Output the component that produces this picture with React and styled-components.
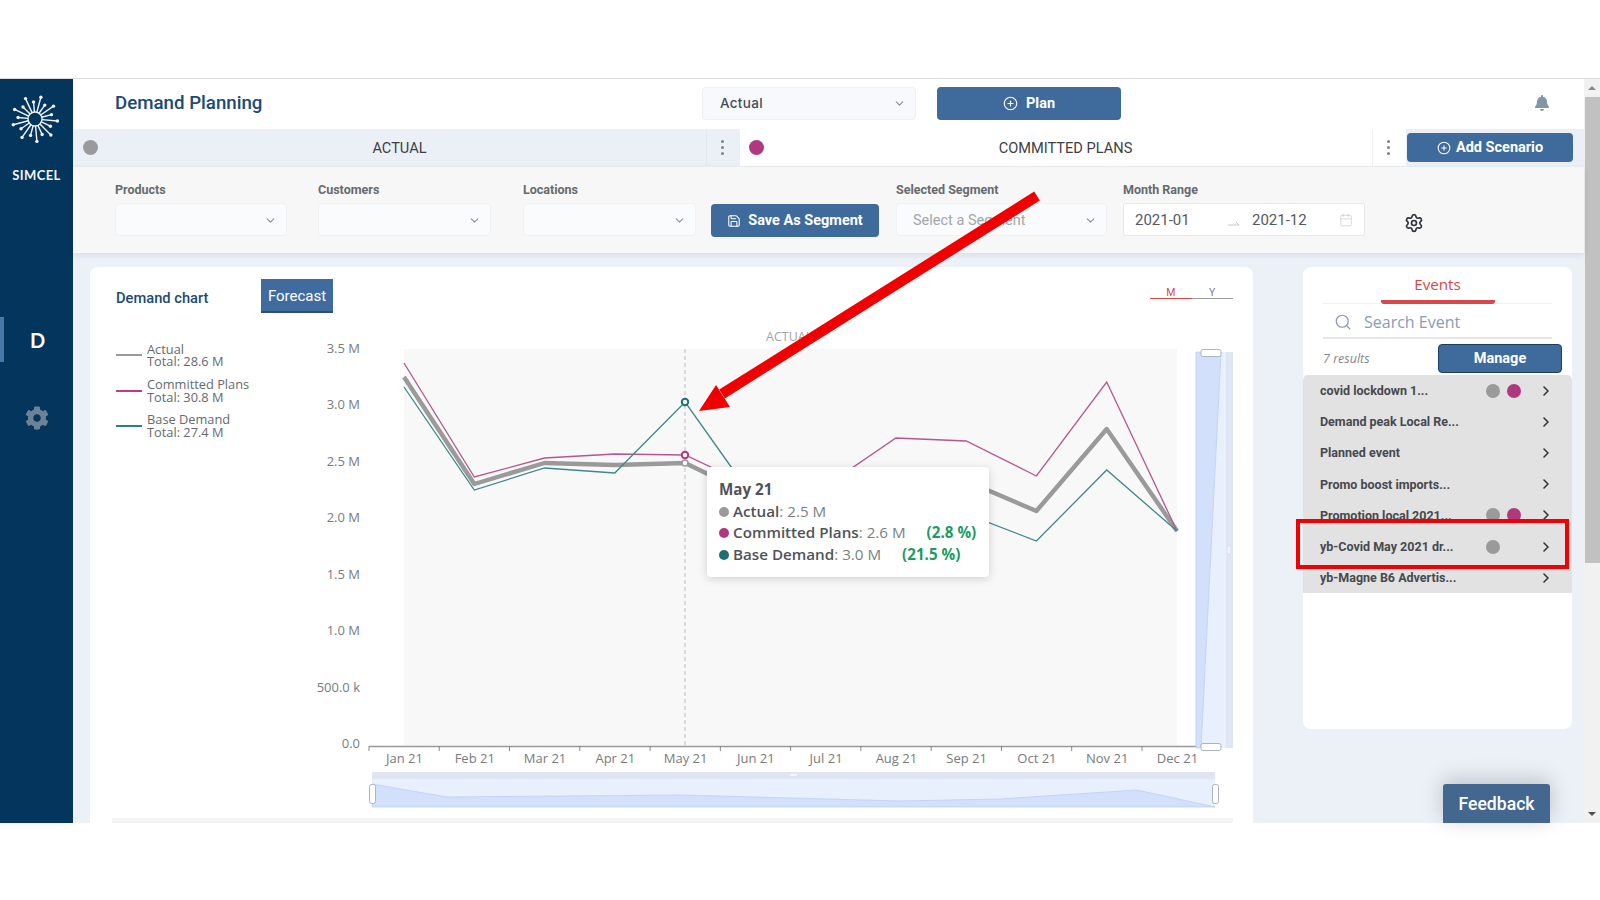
import React from 'react';
import styled, { createGlobalStyle } from 'styled-components';
import { ChevronDown, ChevronRight, CirclePlus, Save, Search, Settings, Calendar } from 'lucide-react';
import { FaBell, FaCog } from 'react-icons/fa';

const Global = createGlobalStyle`
  html, body { margin: 0; padding: 0; background: #fff; overflow: hidden; }
  * { box-sizing: border-box; }
  body { font-family: Roboto, "Liberation Sans", sans-serif; }
`;

const Page = styled.div`position: relative; width: 1600px; height: 900px; background: #fff; overflow: hidden;`;
const TopGap = styled.div`height: 79px; border-bottom: 1px solid #dcdcdc;`;
const AppFrame = styled.div`display: flex; height: 744px;`;

const Sidebar = styled.aside`
  width: 73px; flex: none; background: #03355d; display: flex; flex-direction: column; align-items: center; position: relative;
`;
const BrandName = styled.div`font: 700 13px Lato, sans-serif; color: #f2f5f8; letter-spacing: .4px; margin-top: 23px;`;
const LogoMark = styled.svg`display: block; width: 50px; height: 50px; margin: 15px 3px 0 0;`;
const NavItem = styled.div`
  align-self: stretch; height: 45px; margin-top: 134px; position: relative; display: flex; align-items: center; justify-content: center;
  font: 700 20px Lato, sans-serif; color: #fff; padding-left: 2px;
  &::before { content: ''; position: absolute; left: 0; top: 0; bottom: 0; width: 4px; background: #4a77a8; }
`;
const NavGear = styled.div`color: #6e8296; margin-top: 44px; display: flex; padding-left: 1px;`;

const Content = styled.main`flex: 1; min-width: 0; display: flex; flex-direction: column; position: relative;`;

const Header = styled.header`display: flex; align-items: center; height: 50px; padding: 0 33px 2px 42px; background: #fff; flex: none;`;
const Title = styled.h1`flex: 0 0 587px; margin: 0; font: 500 18.7px Roboto, sans-serif; color: #1b4a76;`;
const HeaderSelect = styled.div`
  width: 214px; height: 33px; background: #f7f9fc; border: 1px solid #eef0f4; border-radius: 4px;
  display: flex; align-items: center; justify-content: space-between; padding: 0 9px 0 17px;
  font: 500 13.5px Inter, sans-serif; color: #444c56; letter-spacing: .3px;
`;
const PlanButton = styled.button`
  width: 184px; height: 33px; margin-left: 21px; border: 0; border-radius: 4px; background: #3f6a9c; color: #fff;
  font: 700 14.5px Roboto, sans-serif; display: flex; align-items: center; justify-content: center; gap: 8px;
`;
const BellSlot = styled.div`margin-left: auto; margin-right: 1px; color: #8296a8; display: flex;`;

const TabsRow = styled.div`display: flex; height: 38px; flex: none; border-bottom: 1px solid #eceef1;`;
const ScenarioTab = styled.div`
  display: flex; align-items: center; flex: 0 0 ${p => p.$w}px; height: 100%; background: ${p => p.$active ? '#ebeff6' : '#fff'};
  padding-left: ${p => p.$pad}px; font: 400 14.6px Roboto, sans-serif; color: #3c3f44;
`;
const TabDot = styled.span`width: 15px; height: 15px; border-radius: 50%; flex: none; background: ${p => p.$c};`;
const TabName = styled.div`flex: 1; text-align: center; padding-right: 5px;`;
const KebabCell = styled.div`
  flex: 0 0 34px; height: 100%; display: flex; flex-direction: column; align-items: center; justify-content: center; gap: 3px; padding-right: 2px;
  background: ${p => p.$active ? '#ebeff6' : '#fff'}; border-left: 1px solid ${p => p.$active ? '#e3e7ee' : '#f0f1f3'};
  & i { width: 3px; height: 3px; border-radius: 50%; background: #7c8288; display: block; }
`;
const AddArea = styled.div`flex: 1; background: #ebeff6; padding: 4px 11px 5px 1px;`;
const AddButton = styled.button`
  width: 100%; height: 29px; border: 0; border-radius: 4px; background: #3f6a9c; color: #fff;
  font: 700 14.5px Roboto, sans-serif; display: flex; align-items: center; justify-content: center; gap: 5px;
`;

const Filters = styled.section`
  display: flex; align-items: flex-end; flex: none; height: 86px; padding: 0 0 17px 42px; background: #f7f7f7;
  box-shadow: 0 2px 6px rgba(40,60,90,.1); position: relative; z-index: 1;
`;
const Field = styled.div`display: flex; flex-direction: column; margin-left: ${p => p.$ml || 0}px; width: ${p => p.$w}px;`;
const FieldLabel = styled.label`font: 700 12.5px Roboto, sans-serif; color: #666a6f; height: 21px;`;
const SelectBox = styled.div`
  height: 33px; background: #fafbfd; border: 1px solid #eff1f4; border-radius: 4px; display: flex; align-items: center;
  justify-content: space-between; padding: 1px 9px 0 16px; font: 400 14.5px Roboto, sans-serif; color: #a3a6aa;
`;
const SaveButton = styled.button`
  width: 168px; height: 33px; margin-left: 15px; margin-bottom: -1px; border: 0; border-radius: 4px; background: #3f6a9c; color: #fff;
  font: 700 14.5px Roboto, sans-serif; display: flex; align-items: center; justify-content: center; gap: 7px;
`;
const RangeBox = styled.div`
  height: 33px; background: #fff; border: 1px solid #e6e8ec; border-radius: 2px; display: flex; align-items: center;
  padding: 1px 11px 0; font: 400 15px Roboto, sans-serif; color: #55595e;
`;
const RangeValue = styled.span`flex: 0 0 ${p => p.$w}px;`;
const RangeArrow = styled.svg`flex: 0 0 12px; height: 6px; margin: 6px 12px 0 0;`;
const GearSlot = styled.div`margin: 0 0 3px 39px; color: #2c3440; display: flex;`;

const Main = styled.div`flex: 1; min-height: 0; background: #ecf0f7; display: flex; align-items: flex-start; padding: 14px 12px 0 17px; gap: 50px; position: relative;`;
const ChartCard = styled.section`
  width: 1163px; height: 100%; background: #fff; border-radius: 8px 8px 0 0; display: flex; flex-direction: column;
`;
const ChartHead = styled.div`display: flex; align-items: flex-start; height: 53px; padding: 12px 20px 0 26px; flex: none;`;
const ChartName = styled.div`font: 500 14.7px Roboto, sans-serif; color: #1d4a74; flex: 0 0 145px; padding-top: 10px;`;
const ForecastButton = styled.button`
  width: 72px; height: 34px; border: 0; border-bottom: 2px solid #2c4f78; background: #406b9f; color: #fff; font: 400 15px Roboto, sans-serif; padding: 2px 0 0;
`;
const PeriodTabs = styled.div`margin-left: auto; display: flex; padding-top: 7px;`;
const PeriodTab = styled.div`
  width: 41.5px; height: 13px; text-align: center; font: 400 10.5px Roboto, sans-serif; line-height: 14px; color: ${p => p.$on ? '#d8484a' : '#7d8186'};
  border-bottom: 1px solid ${p => p.$on ? '#d8484a' : '#9a9a9a'};
`;
const ChartBody = styled.div`flex: 1; min-height: 0; display: flex; position: relative;`;
const Legend = styled.ul`flex: 0 0 220px; list-style: none; margin: 0; padding: 23px 0 0 26px; display: flex; flex-direction: column; gap: 10.3px;`;
const LegendRow = styled.li`display: flex; align-items: center; font: 400 12.8px/12.4px "Open Sans", sans-serif; color: #666a6e;`;
const LegendLine = styled.span`width: 26px; height: 2px; background: ${p => p.$c}; margin-right: 5px; flex: none;`;
const ChartSvg = styled.svg`display: block; flex: none;`;
const BottomStrip = styled.div`height: 5px; flex: none; margin: 0 20px 0 22px; background: #f4f4f5;`;

const Tooltip = styled.div`
  position: absolute; left: 617px; top: 147px; width: 282px; height: 110px; background: #fff; border-radius: 4px;
  box-shadow: 0 2px 10px rgba(0,0,0,.16); padding: 12px 12px; font: 400 15.2px/21.7px "Open Sans", sans-serif; color: #7b7f83;
`;
const TipTitle = styled.div`font-weight: 700; color: #4f5357;`;
const TipRow = styled.div`display: flex; align-items: center; white-space: nowrap;`;
const TipDot = styled.span`width: 10px; height: 10px; border-radius: 50%; margin-right: 4px; background: ${p => p.$c};`;
const TipName = styled.b`font-weight: 600; color: #4f5357;`;
const TipDelta = styled.b`font-weight: 700; color: #1f9a63; margin-left: 21px;`;

const EventsCard = styled.aside`width: 269px; height: 462px; background: #fff; border-radius: 8px; position: relative; display: flex; flex-direction: column;`;
const EventTabs = styled.div`margin: 0 20px; border-bottom: 1px solid #f0f0f2; display: flex; justify-content: center; height: 37px; flex: none;`;
const EventTab = styled.div`width: 114px; height: 37px; text-align: center; font: 500 15.2px/35px "Open Sans", sans-serif; color: #d8484a; border-bottom: 4px solid #d8484a; border-radius: 0 0 3px 3px;`;
const SearchRow = styled.div`margin: 0 20px; height: 35px; flex: none; border-bottom: 2px solid #e4e6ea; display: flex; align-items: center; padding: 2px 0 0 11px; gap: 12px; font: 400 16px "Open Sans", sans-serif; color: #8c9ab5;`;
const ResultsRow = styled.div`margin: 0 10px 0 20px; height: 36px; padding-top: 3px; flex: none; display: flex; align-items: center; justify-content: space-between;`;
const ResultCount = styled.span`font: italic 400 12.5px "Open Sans", sans-serif; color: #84878a;`;
const ManageButton = styled.button`width: 124px; height: 29px; border: 1px solid #1f3d5e; border-radius: 4px; background: #3f6a9c; color: #fff; font: 700 14.5px Roboto, sans-serif; padding: 0;`;
const EventList = styled.ul`list-style: none; margin: 0; padding: 0; background: #e2e2e2; border-radius: 5px 5px 0 0;`;
const EventRow = styled.li`height: 31.2px; display: flex; align-items: center; padding: 0 9px 0 17px; font: 700 12.5px Roboto, sans-serif; color: #46494d;`;
const EventName = styled.span`flex: 1; white-space: nowrap;`;
const EventDots = styled.span`flex: 0 0 35px; display: flex; gap: 7px;`;
const EventDot = styled.i`width: 14px; height: 14px; border-radius: 50%; background: ${p => p.$c}; display: block;`;
const EventChevron = styled.span`flex: 0 0 34px; margin-left: 8px; display: flex; justify-content: center; color: #33363a;`;
const RedBox = styled.div`position: absolute; left: -7px; top: 252px; width: 273px; height: 50px; border: 4px solid #f00000; pointer-events: none;`;

const Feedback = styled.button`
  position: absolute; left: 1370px; bottom: 0; width: 107px; height: 39px; border: 0; border-radius: 3px 3px 0 0; background: #44678f; color: #fff;
  font: 500 17.6px Roboto, sans-serif; box-shadow: 0 -4px 22px rgba(0,0,0,.2); padding: 0;
`;

const ScrollBar = styled.div`width: 16px; flex: none; background: #f1f1f1; display: flex; flex-direction: column; align-items: center;`;
const ScrollArrow = styled.div`height: 18px; flex: none; display: flex; align-items: center; justify-content: center; &::before { content: ''; border-left: 4px solid transparent; border-right: 4px solid transparent; ${p => p.$up ? 'border-bottom: 4px solid #888;' : 'border-top: 4px solid #505050;'} }`;
const ScrollThumb = styled.div`align-self: stretch; height: 466px; background: #c1c1c1; margin-left: 1px;`;
const ScrollRest = styled.div`flex: 1;`;

const BigArrow = styled.svg`position: absolute; left: 690px; top: 185px; width: 360px; height: 235px; pointer-events: none; z-index: 5;`;

const C = { grey: '#9a9a9a', pink: '#b0387f', teal: '#1f6f72' };
const Y_LABELS = ['3.5 M', '3.0 M', '2.5 M', '2.0 M', '1.5 M', '1.0 M', '500.0 k', '0.0'];
const MONTHS = ['Jan 21', 'Feb 21', 'Mar 21', 'Apr 21', 'May 21', 'Jun 21', 'Jul 21', 'Aug 21', 'Sep 21', 'Oct 21', 'Nov 21', 'Dec 21'];
const xAt = i => 404 + i * 70.27;
const toPts = ys => ys.map((y, i) => `${xAt(i).toFixed(1)},${y}`).join(' ');
const committed = [363, 477, 458, 454, 455, 488, 486, 438, 441, 476, 382, 531];
const actual = [377, 484, 463, 465, 463, 497, 490, 470, 481, 511, 429, 531];
const base = [387, 490, 468, 473, 402, 501, 505, 500, 514, 541, 470, 531];

function Chart() {
  return (
    <ChartSvg width={943} height={498} viewBox="310 320 943 498">
      <rect x={404} y={349} width={773} height={397} fill="#f8f8f8" />
      <text x={766} y={341} fontFamily="Open Sans" fontSize={12.5} fill="#a0a3a6">ACTUAL</text>
      {Y_LABELS.map((t, i) => (
        <text key={t} x={360} y={352.5 + i * 56.5} textAnchor="end" fontFamily="Open Sans" fontSize={13} fill="#777b7f">{t}</text>
      ))}
      <line x1={685} y1={349} x2={685} y2={746} stroke="#bdbdbd" strokeDasharray="4 3" />
      <line x1={369} y1={746.5} x2={1212} y2={746.5} stroke="#999" strokeWidth={1.5} />
      {Array.from({ length: 13 }).map((_, i) => (
        <line key={i} x1={369 + i * 70.27} y1={746} x2={369 + i * 70.27} y2={751} stroke="#888" />
      ))}
      {MONTHS.map((m, i) => (
        <text key={m} x={404.5 + i * 70.27} y={763} textAnchor="middle" fontFamily="Open Sans" fontSize={13} fill="#777b7f">{m}</text>
      ))}
      <polyline points={toPts(actual)} fill="none" stroke={C.grey} strokeWidth={4.4} strokeLinejoin="round" />
      <polyline points={toPts(committed)} fill="none" stroke="#b4578f" strokeWidth={1.3} />
      <polyline points={toPts(base)} fill="none" stroke="#3e888b" strokeWidth={1.3} />
      <circle cx={685} cy={463} r={3} fill="#fff" stroke={C.grey} strokeWidth={1.6} />
      <circle cx={685} cy={455} r={3.2} fill="#fff" stroke={C.pink} strokeWidth={2} />
      <circle cx={685} cy={402} r={3.2} fill="#fff" stroke={C.teal} strokeWidth={2} />

      <rect x={1196} y={352} width={37} height={396} fill="#dfe5f3" />
      <rect x={1196} y={352} width={30} height={396} fill="#e8effd" />
      <polygon points="1196,352 1221,352 1201,748 1196,748" fill="#d3e0fb" stroke="#bccff5" strokeWidth={0.8} />
      <rect x={1228} y={547} width={2} height={6} fill="#f4f6fb" />
      <rect x={1201} y={349.5} width={20} height={7} rx={2} fill="#fff" stroke="#a9b4c6" />
      <rect x={1201} y={743.5} width={20} height={7} rx={2} fill="#fff" stroke="#a9b4c6" />

      <rect x={372} y={772} width={843} height={35} fill="#e8effd" />
      <rect x={372} y={772} width={843} height={7} fill="#dfe5f3" />
      <polygon points="372,784 447,797 680,795 900,801 1000,799 1137,790 1215,807 372,807" fill="#d3e0fb" stroke="#bccff5" strokeWidth={0.8} />
      <rect x={790} y={774} width={7} height={2} fill="#f4f6fb" />
      <rect x={369.5} y={784.5} width={6} height={19} rx={2} fill="#fff" stroke="#a9b4c6" />
      <rect x={1212.5} y={784.5} width={6} height={19} rx={2} fill="#fff" stroke="#a9b4c6" />
    </ChartSvg>
  );
}

function Logo() {
  const rays = Array.from({ length: 18 }).map((_, i) => {
    const a = (i / 18) * Math.PI * 2 + 0.09;
    const len = i % 2 === 0 ? 22.5 : 17;
    const c = Math.cos(a), s = Math.sin(a);
    return { x1: 25 + c * 7, y1: 25 + s * 7, x2: 25 + c * len, y2: 25 + s * len };
  });
  return (
    <LogoMark viewBox="0 0 50 50">
      <circle cx={25} cy={25} r={7} fill="none" stroke="#f0f4f8" strokeWidth={1.4} />
      {rays.map((r, i) => (
        <g key={i}>
          <line x1={r.x1} y1={r.y1} x2={r.x2} y2={r.y2} stroke="#f0f4f8" strokeWidth={1.4} />
          <circle cx={r.x2} cy={r.y2} r={1.7} fill="#f0f4f8" />
        </g>
      ))}
    </LogoMark>
  );
}

const EVENTS = [
  ['covid lockdown 1...', [C.grey, C.pink]],
  ['Demand peak Local Re...', []],
  ['Planned event', []],
  ['Promo boost imports...', []],
  ['Promotion local 2021...', [C.grey, C.pink]],
  ['yb-Covid May 2021 dr...', [C.grey]],
  ['yb-Magne B6 Advertis...', []],
];

export default function App() {
  return (
    <Page>
      <Global />
      <TopGap />
      <AppFrame>
        <Sidebar>
          <Logo />
          <BrandName>SIMCEL</BrandName>
          <NavItem>D</NavItem>
          <NavGear><FaCog size={24} /></NavGear>
        </Sidebar>
        <Content>
          <Header>
            <Title>Demand Planning</Title>
            <HeaderSelect>Actual<ChevronDown size={13} color="#8a8f96" /></HeaderSelect>
            <PlanButton><CirclePlus size={15} strokeWidth={1.8} />Plan</PlanButton>
            <BellSlot><FaBell size={16} /></BellSlot>
          </Header>
          <TabsRow>
            <ScenarioTab $active $w={633} $pad={10}><TabDot $c={C.grey} /><TabName>ACTUAL</TabName></ScenarioTab>
            <KebabCell $active><i /><i /><i /></KebabCell>
            <ScenarioTab $w={632} $pad={9}><TabDot $c={C.pink} /><TabName>COMMITTED PLANS</TabName></ScenarioTab>
            <KebabCell><i /><i /><i /></KebabCell>
            <AddArea><AddButton><CirclePlus size={14} strokeWidth={1.8} />Add Scenario</AddButton></AddArea>
          </TabsRow>
          <Filters>
            <Field $w={172}><FieldLabel>Products</FieldLabel><SelectBox><span /><ChevronDown size={13} color="#8a8f96" /></SelectBox></Field>
            <Field $w={173} $ml={31}><FieldLabel>Customers</FieldLabel><SelectBox><span /><ChevronDown size={13} color="#8a8f96" /></SelectBox></Field>
            <Field $w={173} $ml={32}><FieldLabel>Locations</FieldLabel><SelectBox><span /><ChevronDown size={13} color="#8a8f96" /></SelectBox></Field>
            <SaveButton><Save size={14} strokeWidth={1.8} />Save As Segment</SaveButton>
            <Field $w={211} $ml={17}><FieldLabel>Selected Segment</FieldLabel><SelectBox>Select a Segment<ChevronDown size={13} color="#8a8f96" /></SelectBox></Field>
            <Field $w={242} $ml={16}>
              <FieldLabel>Month Range</FieldLabel>
              <RangeBox>
                <RangeValue $w={93}>2021-01</RangeValue>
                <RangeArrow viewBox="0 0 12 6"><path d="M0 5h11L8 2" fill="none" stroke="#c4c7cb" strokeWidth="1" /></RangeArrow>
                <RangeValue $w={87}>2021-12</RangeValue>
                <Calendar size={16} color="#c6c9cd" strokeWidth={1.2} />
              </RangeBox>
            </Field>
            <GearSlot><Settings size={20} strokeWidth={2} /></GearSlot>
          </Filters>
          <Main>
            <ChartCard>
              <ChartHead>
                <ChartName>Demand chart</ChartName>
                <ForecastButton>Forecast</ForecastButton>
                <PeriodTabs><PeriodTab $on>M</PeriodTab><PeriodTab>Y</PeriodTab></PeriodTabs>
              </ChartHead>
              <ChartBody>
                <Legend>
                  <LegendRow><LegendLine $c={C.grey} /><span>Actual<br />Total: 28.6 M</span></LegendRow>
                  <LegendRow><LegendLine $c="#c03a8a" /><span>Committed Plans<br />Total: 30.8 M</span></LegendRow>
                  <LegendRow><LegendLine $c="#2d7d80" /><span>Base Demand<br />Total: 27.4 M</span></LegendRow>
                </Legend>
                <Chart />
                <Tooltip>
                  <TipTitle>May 21</TipTitle>
                  <TipRow><TipDot $c={C.grey} /><TipName>Actual</TipName>: 2.5 M</TipRow>
                  <TipRow><TipDot $c={C.pink} /><TipName>Committed Plans</TipName>: 2.6 M<TipDelta>(2.8 %)</TipDelta></TipRow>
                  <TipRow><TipDot $c={C.teal} /><TipName>Base Demand</TipName>: 3.0 M<TipDelta>(21.5 %)</TipDelta></TipRow>
                </Tooltip>
              </ChartBody>
              <BottomStrip />
            </ChartCard>
            <EventsCard>
              <EventTabs><EventTab>Events</EventTab></EventTabs>
              <SearchRow><Search size={18} strokeWidth={1.6} />Search Event</SearchRow>
              <ResultsRow><ResultCount>7 results</ResultCount><ManageButton>Manage</ManageButton></ResultsRow>
              <EventList>
                {EVENTS.map(([name, dots]) => (
                  <EventRow key={name}>
                    <EventName>{name}</EventName>
                    <EventDots>{dots.map(c => <EventDot key={c} $c={c} />)}</EventDots>
                    <EventChevron><ChevronRight size={16} strokeWidth={2.4} /></EventChevron>
                  </EventRow>
                ))}
              </EventList>
              <RedBox />
            </EventsCard>
            <Feedback>Feedback</Feedback>
          </Main>
        </Content>
        <ScrollBar>
          <ScrollArrow $up />
          <ScrollThumb />
          <ScrollRest />
          <ScrollArrow />
        </ScrollBar>
      </AppFrame>
      <BigArrow viewBox="690 185 360 235">
        <line x1="1037" y1="196" x2="722" y2="394" stroke="#f00000" strokeWidth="10.5" />
        <polygon points="699,411 716,385 730,407" fill="#f00000" />
      </BigArrow>
    </Page>
  );
}
